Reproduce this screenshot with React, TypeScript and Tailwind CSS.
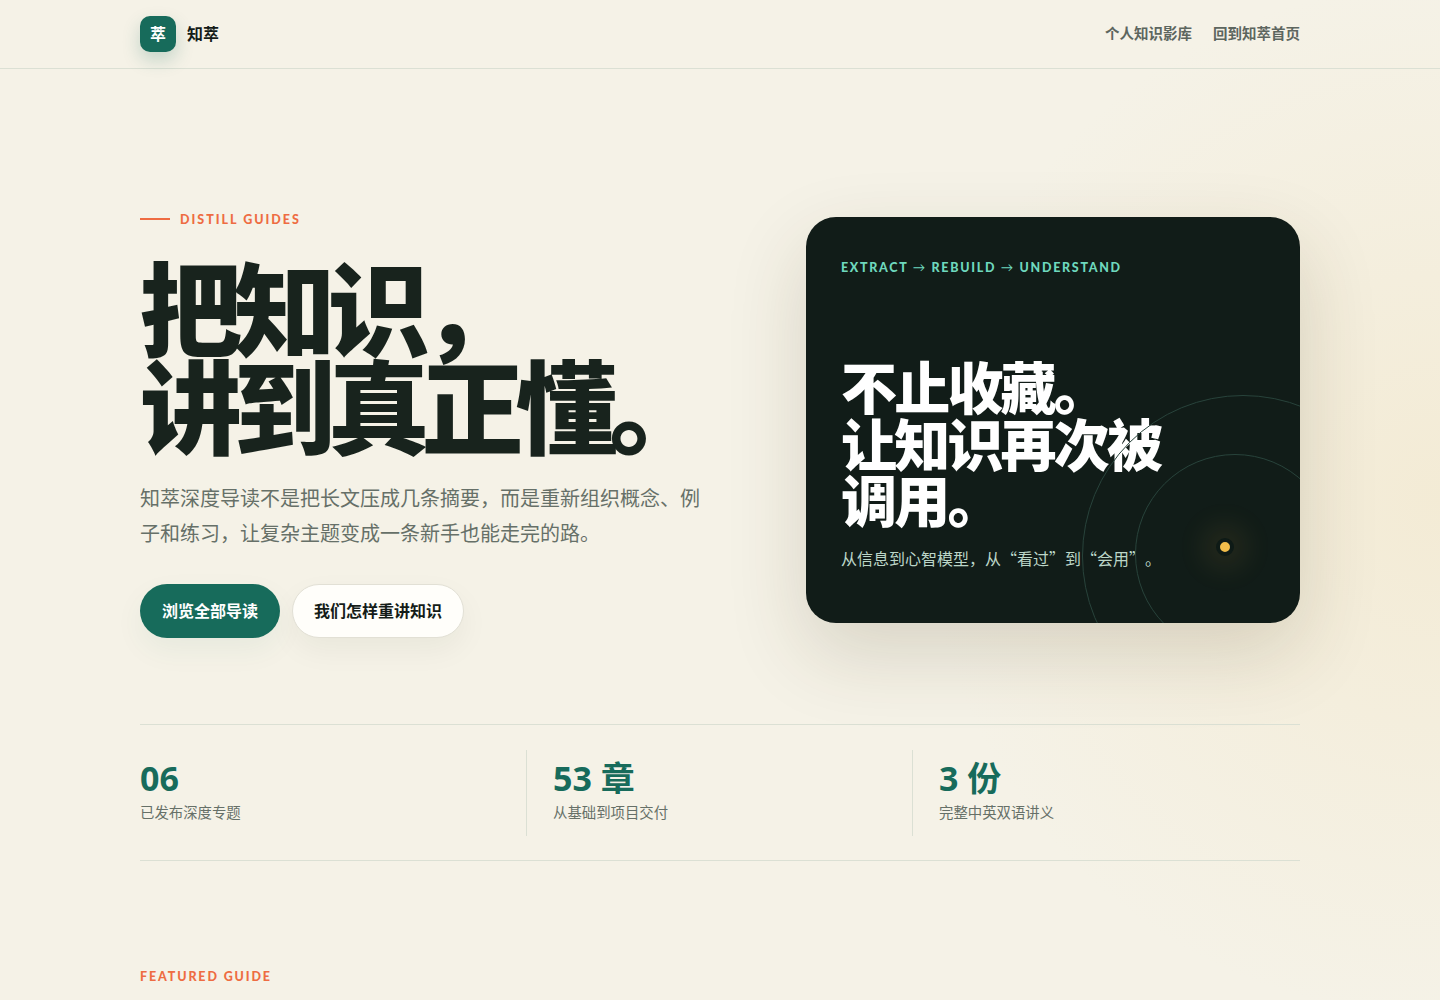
export default function App() {
  return (
    <div className="h-[1000px] overflow-hidden bg-[#f5f2e7] bg-[radial-gradient(circle_at_100%_50%,rgba(240,222,180,0.35),rgba(245,242,231,0)_34%)] font-['Noto_Sans_CJK_SC','Noto_Sans',sans-serif] text-[#18231d]">
      <header className="h-[69px] border-b border-[#dbe0d4]">
        <div className="mx-auto flex h-[68px] w-[1160px] items-center justify-between">
          <div className="flex items-center gap-[11px]">
            <div className="flex h-9 w-9 items-center justify-center rounded-[10px] bg-[#176b5b] pb-[2px] text-[16px] font-bold text-white shadow-[0_8px_18px_rgba(23,107,91,0.22)]">萃</div>
            <span className="pb-[2px] text-[16px] font-bold text-[#141c18]">知萃</span>
          </div>
          <nav className="flex gap-[21px] pb-[2px] text-[14.5px] font-semibold text-[#5d665f]">
            <span>个人知识影库</span>
            <span>回到知萃首页</span>
          </nav>
        </div>
      </header>
      <main className="mx-auto w-[1160px]">
        <section className="flex h-[655px] items-start justify-between">
          <div className="w-[570px] pt-[141px]">
            <div className="flex h-5 items-center gap-[10px]">
              <span className="h-[2px] w-[30px] -translate-y-[1px] bg-[#ee6c42]"></span>
              <span className="font-['Lato'] text-[12.5px] font-black tracking-[0.16em] text-[#ee6c42]">DISTILL GUIDES</span>
            </div>
            <h1 className="mt-[26px] whitespace-nowrap text-[102px] leading-[98px] font-black tracking-[-0.08em] text-[#18231d]">把知识，<br />讲到真正懂。</h1>
            <p className="mt-[28px] w-[570px] text-[20px] leading-[35px] text-[#667068]">知萃深度导读不是把长文压成几条摘要，而是重新组织概念、例子和练习，让复杂主题变成一条新手也能走完的路。</p>
            <div className="mt-[34px] flex gap-[12px]">
              <button className="h-[54px] rounded-full bg-[#176b5b] px-[22px] pb-[2px] text-[16px] font-bold text-white shadow-[0_12px_30px_rgba(23,107,91,0.06)]">浏览全部导读</button>
              <button className="h-[54px] rounded-full border border-[#e2e0d5] bg-[#fffefa] px-[21px] pb-[2px] text-[16px] font-bold text-[#141c18] shadow-[0_12px_30px_rgba(24,35,29,0.05)]">我们怎样重讲知识</button>
            </div>
          </div>
          <div className="relative mt-[148px] h-[406px] w-[494px] overflow-hidden rounded-[30px] bg-[#111c18] px-[35px] pt-[41px] shadow-[0_30px_80px_rgba(60,50,20,0.16)]">
            <div className="h-5 font-['Lato'] text-[12.5px] leading-[20px] font-black tracking-[0.135em] text-[#6ed8bd]">EXTRACT <span className="font-normal">→</span> REBUILD <span className="font-normal">→</span> UNDERSTAND</div>
            <h2 className="mt-[79px] text-[56px] leading-[56.5px] font-black tracking-[-0.05em] text-white">不止收藏。<br />让知识再次被<br />调用。</h2>
            <p className="mt-[17px] text-[16px] leading-[28px] text-[#bcd6c8] [text-spacing-trim:space-all]">从信息到心智模型，从“看过”到“会用”。</p>
            <div className="absolute left-[276px] top-[178px] h-[322px] w-[322px] rounded-full border border-[#28433b]"></div>
            <div className="absolute left-[329px] top-[237px] h-[200px] w-[200px] rounded-full border border-[#28433b]"></div>
            <div className="absolute left-[410px] top-[321px] h-[18px] w-[18px] rounded-full border-[4px] border-[#0e1a16] bg-[#f2bd4b] shadow-[0_0_30px_12px_rgba(242,189,75,0.1)]"></div>
          </div>
        </section>
        <section className="grid h-[137px] grid-cols-[386px_386px_1fr] items-center border-y border-[#dbe0d4]">
          <div className="h-[86px] pt-[6px]">
            <div className="font-['Noto_Sans','Noto_Sans_CJK_SC',sans-serif] text-[34px] leading-[44px] font-bold text-[#176b5b]">06</div>
            <div className="mt-[2px] text-[14.4px] leading-[20px] text-[#667068]">已发布深度专题</div>
          </div>
          <div className="h-[86px] border-l border-[#dbe0d4] pl-[26px] pt-[6px]">
            <div className="font-['Noto_Sans','Noto_Sans_CJK_SC',sans-serif] text-[34px] leading-[44px] font-bold text-[#176b5b]">53 章</div>
            <div className="mt-[2px] text-[14.4px] leading-[20px] text-[#667068]">从基础到项目交付</div>
          </div>
          <div className="h-[86px] border-l border-[#dbe0d4] pl-[26px] pt-[6px]">
            <div className="font-['Noto_Sans','Noto_Sans_CJK_SC',sans-serif] text-[34px] leading-[44px] font-bold text-[#176b5b]">3 份</div>
            <div className="mt-[2px] text-[14.4px] leading-[20px] text-[#667068]">完整中英双语讲义</div>
          </div>
        </section>
        <div className="mt-[106px] font-['Lato'] text-[12.5px] leading-[20px] font-black tracking-[0.15em] text-[#ee6c42]">FEATURED GUIDE</div>
      </main>
    </div>
  );
}
